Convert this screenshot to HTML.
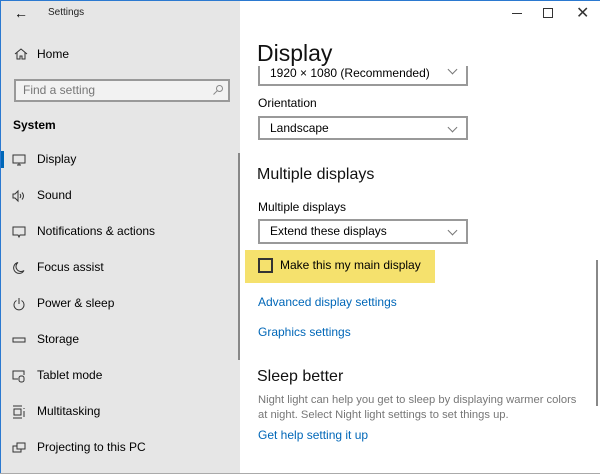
<!DOCTYPE html><html><head><style>
*{margin:0;padding:0;box-sizing:border-box}
body{width:600px;height:474px;overflow:hidden;background:#fff;font-family:"Liberation Sans",sans-serif;position:relative;color:#000}
.a{position:absolute;white-space:nowrap}
#side{position:absolute;left:0;top:0;width:240px;height:474px;background:#e6e6e6;border-left:1px solid #2b79d0;z-index:3}
.it{position:absolute;left:36px;font-size:12px;line-height:14px}
.ic{position:absolute;left:11px;width:14px;height:14px}
.dd{position:absolute;left:258px;width:210px;border:2px solid #999;background:#fff;font-size:12px;padding-left:10px}
.dd:after{content:"";position:absolute;right:10px;top:6px;width:6px;height:6px;border-right:1px solid #777;border-bottom:1px solid #777;transform:rotate(45deg)}
.lk{color:#0067b8;font-size:12px}
</style></head><body>
<div style="position:absolute;left:240px;top:0;width:360px;height:66px;background:#fff;z-index:2"></div>
<div style="position:absolute;left:0;top:0;width:600px;height:1px;background:#2b79d0;z-index:4"></div>
<div style="position:absolute;left:0;top:473px;width:600px;height:1px;background:#aaa;z-index:4"></div>
<div id="side">
<div class="a" style="left:13px;top:5px;font-size:14px">&#8592;</div>
<div class="a" style="left:47px;top:7px;font-size:10px;color:#222">Settings</div>
<svg class="ic" style="top:47px;left:13px" viewBox="0 0 14 14"><path d="M1 7L7 2l6 5M3 5.5V12h3V9h2v3h3V5.5" fill="none" stroke="#333" stroke-width="1"/></svg>
<div class="it" style="top:47px">Home</div>
<div style="position:absolute;left:13px;top:79px;width:216px;height:23px;border:2px solid #999;background:#f2f2f2"></div>
<div class="a" style="left:22px;top:83px;font-size:12px;color:#777">Find a setting</div>
<svg class="a" style="left:211px;top:84px" width="12" height="12" viewBox="0 0 12 12"><circle cx="7.5" cy="4.5" r="3" fill="none" stroke="#888"/><path d="M5.3 6.7L1.5 10.5" stroke="#888"/></svg>
<div class="a" style="left:12px;top:118px;font-size:12px;font-weight:bold">System</div>
<div style="position:absolute;left:0;top:151px;width:3px;height:17px;background:#0067b8"></div>
<div class="it" style="top:152px">Display</div>
<div class="it" style="top:188px">Sound</div>
<div class="it" style="top:224px">Notifications &amp; actions</div>
<div class="it" style="top:260px">Focus assist</div>
<div class="it" style="top:296px">Power &amp; sleep</div>
<div class="it" style="top:332px">Storage</div>
<div class="it" style="top:368px">Tablet mode</div>
<div class="it" style="top:404px">Multitasking</div>
<div class="it" style="top:440px">Projecting to this PC</div>
<svg class="ic" style="top:153px" viewBox="0 0 14 14"><rect x="1" y="2" width="12" height="8" fill="none" stroke="#333"/><path d="M5 12h4M7 10v2" stroke="#333"/></svg>
<svg class="ic" style="top:189px" viewBox="0 0 14 14"><path d="M1 5h2l3-3v10L3 9H1z M8 5q1.5 2 0 4M10 3.5q3 3.5 0 7" fill="none" stroke="#333"/></svg>
<svg class="ic" style="top:225px" viewBox="0 0 14 14"><path d="M1 2h12v8H8l-1 2-1-2H1z" fill="none" stroke="#333"/></svg>
<svg class="ic" style="top:261px" viewBox="0 0 14 14"><path d="M6 1.5a5.5 5.5 0 1 0 6 8A5 5 0 0 1 6 1.5z" fill="none" stroke="#333"/></svg>
<svg class="ic" style="top:297px" viewBox="0 0 14 14"><path d="M4.5 3.5a5 5 0 1 0 5 0M7 1v6" fill="none" stroke="#333"/></svg>
<svg class="ic" style="top:333px" viewBox="0 0 14 14"><rect x="1" y="5" width="12" height="4" fill="none" stroke="#333"/></svg>
<svg class="ic" style="top:369px" viewBox="0 0 14 14"><path d="M6 10H1V2h11v4" fill="none" stroke="#333"/><rect x="7" y="7" width="5" height="6" rx="2" fill="none" stroke="#333"/></svg>
<svg class="ic" style="top:405px" viewBox="0 0 14 14"><path d="M1 1h9M1 13h9M2 4h7v6H2zM12 3v1M12 6v6" fill="none" stroke="#333"/></svg>
<svg class="ic" style="top:441px" viewBox="0 0 14 14"><rect x="5" y="2" width="8" height="6" fill="none" stroke="#333"/><path d="M5 5H1v6h8V8" fill="none" stroke="#333"/></svg>
<div style="position:absolute;left:237px;top:153px;width:2px;height:207px;background:#888"></div>
</div>
<div style="position:absolute;left:512px;top:13px;width:10px;height:1px;background:#333;z-index:4"></div>
<div style="position:absolute;left:543px;top:8px;width:10px;height:10px;border:1px solid #333;z-index:4"></div>
<div class="a" style="left:576px;top:3px;font-size:16px;color:#333;z-index:4">&#10005;</div>
<div class="a" style="left:257px;top:40px;font-size:23px;color:#111;z-index:4">Display</div>
<div class="dd" style="top:58px;height:28px;line-height:26px;overflow:hidden">1920 × 1080 (Recommended)</div>
<div class="a" style="left:258px;top:96px;font-size:12px">Orientation</div>
<div class="dd" style="top:116px;height:24px;line-height:20px">Landscape</div>
<div class="a" style="left:257px;top:166px;font-size:16px;color:#111">Multiple displays</div>
<div class="a" style="left:258px;top:200px;font-size:12px">Multiple displays</div>
<div class="dd" style="top:219px;height:25px;line-height:21px">Extend these displays</div>
<div style="position:absolute;left:245px;top:250px;width:190px;height:33px;background:#f5e16d"></div>
<div style="position:absolute;left:258px;top:258px;width:15px;height:15px;border:2px solid #333"></div>
<div class="a" style="left:280px;top:258px;font-size:12px">Make this my main display</div>
<div class="a lk" style="left:258px;top:295px">Advanced display settings</div>
<div class="a lk" style="left:258px;top:325px">Graphics settings</div>
<div class="a" style="left:257px;top:368px;font-size:16px;color:#111">Sleep better</div>
<div class="a" style="left:258px;top:393px;font-size:11.2px;color:#777;line-height:15px">Night light can help you get to sleep by displaying warmer colors<br>at night. Select Night light settings to set things up.</div>
<div class="a lk" style="left:258px;top:428px">Get help setting it up</div>
<div style="position:absolute;left:596px;top:260px;width:2px;height:146px;background:#888"></div>
</body></html>
